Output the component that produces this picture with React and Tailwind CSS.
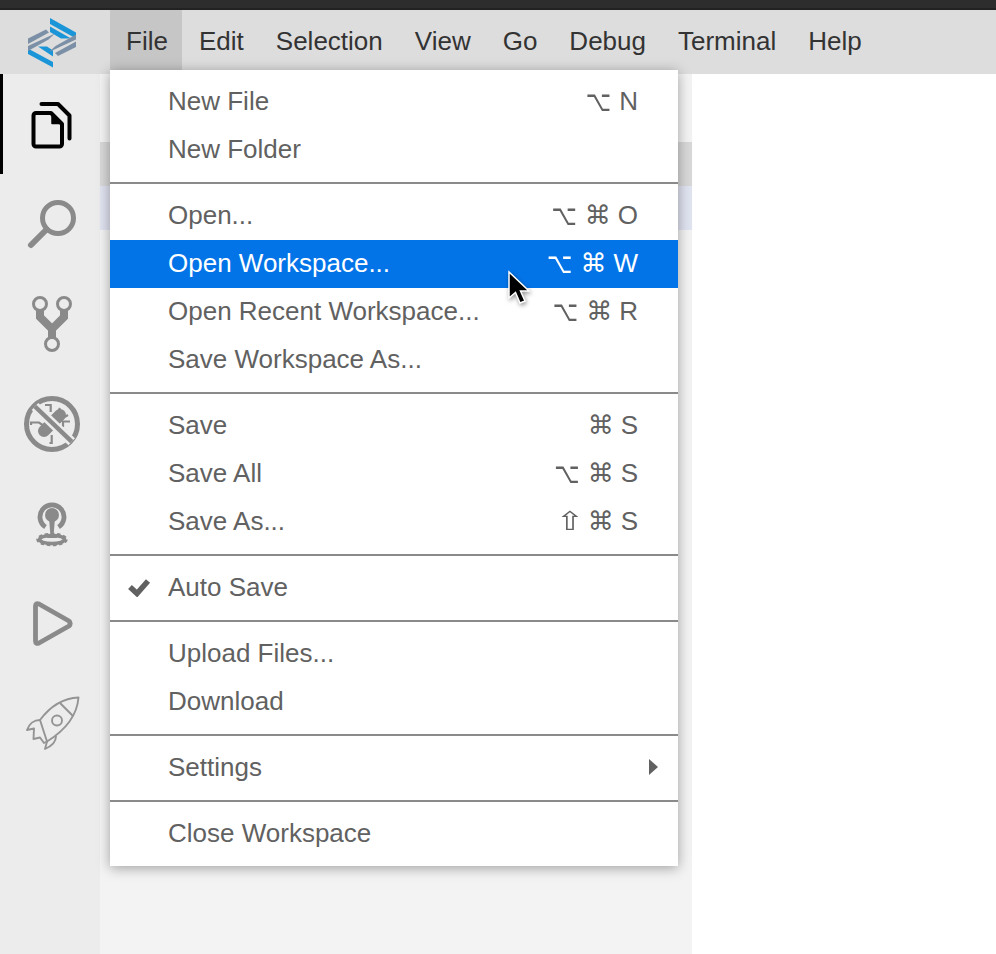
import React from 'react';

const menuBar = ['Edit', 'Selection', 'View', 'Go', 'Debug', 'Terminal', 'Help'];

const groups = [
  [{ label: 'New File', keys: ['⌥', 'N'] }, { label: 'New Folder' }],
  [
    { label: 'Open...', keys: ['⌥', '⌘', 'O'] },
    { label: 'Open Workspace...', keys: ['⌥', '⌘', 'W'], active: true },
    { label: 'Open Recent Workspace...', keys: ['⌥', '⌘', 'R'] },
    { label: 'Save Workspace As...' },
  ],
  [
    { label: 'Save', keys: ['⌘', 'S'] },
    { label: 'Save All', keys: ['⌥', '⌘', 'S'] },
    { label: 'Save As...', keys: ['⇧', '⌘', 'S'] },
  ],
  [{ label: 'Auto Save', checked: true }],
  [{ label: 'Upload Files...' }, { label: 'Download' }],
  [{ label: 'Settings', submenu: true }],
  [{ label: 'Close Workspace' }],
];

const Logo = () => (
  <svg width="110" height="64" viewBox="0 10 110 64">
    <g fill="#1a95d8">
      <path d="M50 18L76 32.500V38.500L50 24Z" />
      <path d="M50 26.500L71 38.500H61L50 32Z" />
      <path d="M53 62V67.500L28 54V48.500Z" />
      <path d="M38 46.500H47L53 50.500V56.500Z" />
    </g>
    <g fill="#7b90a6">
      <path d="M28 38.500L46 29.500L49 32.500L28 44Z" />
      <path d="M28 46L55 33.500L48.500 39.500L28 51Z" />
      <path d="M76 47L58 56L55 53L76 41.500Z" />
      <path d="M76 39.500L49 52L55.500 46L76 34.500Z" />
    </g>
  </svg>
);

const FilesIcon = () => (
  <svg width="100" height="100" viewBox="0 0 100 100" fill="none" stroke="#000" strokeWidth="4" strokeLinejoin="round" strokeLinecap="round">
    <path d="M51 39H36a2.500 2.500 0 0 0-2.500 2.500V70a2.500 2.500 0 0 0 2.500 2.500H59.500A2.500 2.500 0 0 0 62 70V50Z" />
    <path d="M52 40V49.500H61Z" fill="#000" strokeWidth="1.500" />
    <path d="M41.500 30H58L69.500 41.500V64.500" />
  </svg>
);

const SearchIcon = () => (
  <svg width="100" height="100" viewBox="0 0 100 100" fill="none" stroke="#8a8a8a" strokeLinecap="round">
    <circle cx="58" cy="44" r="15.500" strokeWidth="5" />
    <path d="M46.500 55.500L31 71" strokeWidth="6" />
  </svg>
);

const GitIcon = () => (
  <svg width="100" height="100" viewBox="0 0 100 100" fill="none" stroke="#8a8a8a">
    <circle cx="40" cy="30" r="6.500" strokeWidth="3" />
    <circle cx="64" cy="30" r="6.500" strokeWidth="3" />
    <circle cx="52" cy="70" r="6.500" strokeWidth="3" />
    <path d="M40 37V43L52 55V63M64 37V43L52 55" strokeWidth="8" />
  </svg>
);

const DebugIcon = () => (
  <svg width="100" height="100" viewBox="0 0 100 100" fill="none" stroke="#8a8a8a">
    <circle cx="52" cy="50" r="25.500" strokeWidth="5" />
    <path d="M44 57L60 41" strokeWidth="12" strokeLinecap="round" />
    <path d="M31 51V48.500H39L44 52M51.700 61V69H49.500M45 31H50.700V38M68 41L61 45M60 34L58 38M70 47.500H63V53M66 56L59 60" strokeWidth="2.200" />
    <path d="M35 32.500L71.700 67.700" stroke="#ececec" strokeWidth="9.500" />
    <path d="M35 32.500L71.700 67.700" strokeWidth="4.500" />
  </svg>
);

const BulbIcon = () => (
  <svg width="100" height="100" viewBox="0 0 100 100" fill="none" stroke="#8a8a8a">
    <ellipse cx="52" cy="65.500" rx="12.500" ry="4" strokeWidth="3.500" />
    <ellipse cx="52" cy="65.500" rx="14.500" ry="5.500" strokeWidth="2.500" strokeDasharray="3.500 2.500" />
    <path d="M45.500 53A12 12 0 1 1 58.500 53" strokeWidth="4.800" />
    <circle cx="52" cy="41" r="7" fill="#8a8a8a" stroke="none" />
    <path d="M49 44L50.300 60L46.500 64H57.500L53.700 60L55 44Z" fill="#8a8a8a" stroke="none" />
  </svg>
);

const PlayIcon = () => (
  <svg width="100" height="100" viewBox="0 0 100 100" fill="none" stroke="#8a8a8a" strokeWidth="4.800" strokeLinejoin="round">
    <path d="M35.500 32Q35.500 28.500 39 30L69 47Q71.500 49.500 69 52L39 69Q35.500 70.500 35.500 67Z" />
  </svg>
);

const RocketIcon = () => (
  <svg width="100" height="100" viewBox="0 0 100 100" fill="none" stroke="#949494" strokeWidth="1.900" strokeLinejoin="round">
    <path d="M78.500 23.500C66 24 52 30 40 46L47 67.500C64 57 77 42 78.500 23.500Z" />
    <path d="M60 29L73 42" />
    <circle cx="57" cy="46.500" r="5" />
    <path d="M40 46C34 46 29 50 27 56L34 54.500L33.500 65L40 63.500L44 69L47 67.500" />
    <path d="M56 62C56 68 52 72 45 75L47 67.500" />
  </svg>
);

const activity = [FilesIcon, SearchIcon, GitIcon, DebugIcon, BulbIcon, PlayIcon, RocketIcon];

const Key = ({ k }) => {
  if (k === '⌥') return <span className="inline-block text-[22px] scale-y-[1.3] mr-[1px]">{k}</span>;
  if (k === '⇧') return <span className="inline-block font-['DejaVu_Sans'] scale-x-[1.3]">{k}</span>;
  return <span>{k}</span>;
};

const MenuRow = ({ item, nudge }) => (
  <div className={`flex items-center h-12 pr-10 ${nudge ? 'pb-[2px]' : ''} ${item.active ? 'bg-[#0374e8] text-white' : 'text-[#616161]'}`}>
    <div className="w-[58px] flex-shrink-0 flex justify-end pr-[17px]">
      {item.checked && (
        <svg width="24" height="20" viewBox="0 0 24 20" fill="none" stroke="#616161" strokeWidth="5.500">
          <path d="M3 10L10 16.500L21 4" />
        </svg>
      )}
    </div>
    <span className="flex-1">{item.label}</span>
    {item.keys && (
      <span className="flex items-center gap-[7px]">
        {item.keys.map(k => <Key key={k} k={k} />)}
      </span>
    )}
    {item.submenu && (
      <svg className="-mr-5" width="9" height="16" viewBox="0 0 9 16" fill="#616161">
        <path d="M0 0V16L9 8Z" />
      </svg>
    )}
  </div>
);

export default function App() {
  return (
    <div className="relative w-[996px] h-[954px] overflow-hidden bg-white text-[26px] font-['Liberation_Sans','DejaVu_Sans',sans-serif]">
      <div className="h-[10px] bg-[#2d2d2d] border-b-2 border-[#222222]" />

      <div className="h-16 flex bg-[#dddddd] text-[#333333]">
        <div className="w-[110px]"><Logo /></div>
        <div className="h-full w-[72px] flex items-center pl-[16px] pb-[2px] bg-[#c6c6c6]">File</div>
        {menuBar.map(name => (
          <div key={name} className="h-full flex items-center pl-[17px] pr-[15px] pb-[2px]">{name}</div>
        ))}
      </div>

      <div className="flex h-[880px]">
        <div className="w-[100px] bg-[#ececec]">
          {activity.map((Icon, i) => (
            <div key={i} className={`h-[100px] ${i === 0 ? 'shadow-[inset_3px_0_0_#000000]' : ''}`}>
              <Icon />
            </div>
          ))}
        </div>
        <div className="w-[592px] bg-[#f3f3f3] pt-[68px]">
          <div className="h-11 bg-[#d8d8d8]" />
          <div className="h-11 bg-[#e0e3f0]" />
        </div>
      </div>

      {/* open File menu */}
      <div className="absolute left-[110px] top-[70px] w-[568px] h-[796px] pt-[7px] bg-white shadow-[0_2px_12px_rgba(0,0,0,0.35)]">
        {groups.map((group, i) => (
          <div key={i}>
            {i > 0 && (
              <div className={`h-[2px] bg-[#8a8a8a] ${i === 1 ? 'mt-[9px] mb-2' : i === 2 ? 'mt-2 mb-[7px]' : 'mt-[9px] mb-[7px]'}`} />
            )}
            {group.map(item => <MenuRow key={item.label} item={item} nudge={i === 1} />)}
          </div>
        ))}
      </div>

      {/* mouse pointer */}
      <svg className="absolute left-[505px] top-[268px] drop-shadow-[1px_2px_2px_rgba(0,0,0,0.4)]" width="30" height="40" viewBox="0 0 30 40">
        <path d="M4 4V30L10.500 24.500L15 35L20 33L15.500 23H24Z" fill="#000" stroke="#fff" strokeWidth="1.500" />
      </svg>
    </div>
  );
}
